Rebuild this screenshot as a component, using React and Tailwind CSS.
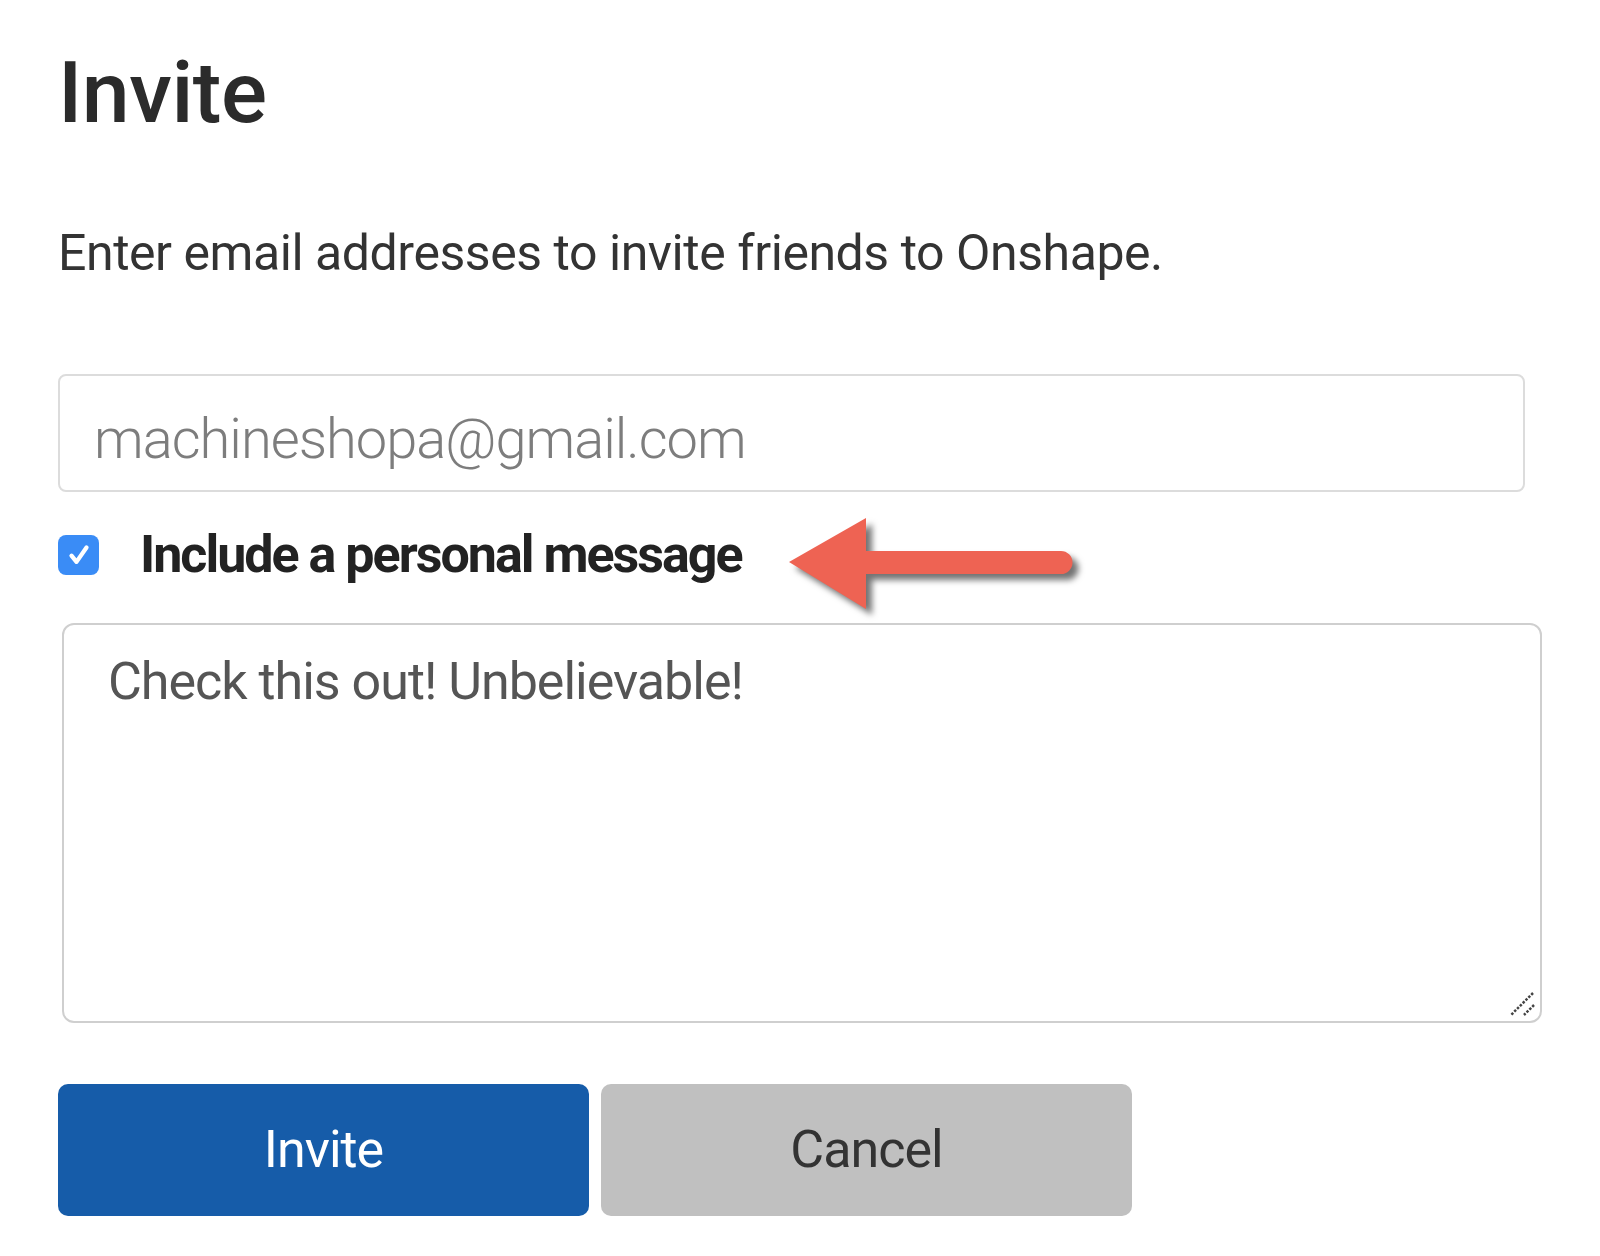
import React from "react";

const ResizeGrip = () => (
  <svg
    className="absolute right-[2px] bottom-[2px]"
    width="32"
    height="32"
    viewBox="0 0 32 32"
  >
    <line x1="27" y1="6" x2="5" y2="28" stroke="#444" strokeWidth="2.5" strokeDasharray="2.5 1.5" />
    <line x1="28" y1="18" x2="18" y2="28" stroke="#444" strokeWidth="2.5" strokeDasharray="2.5 1.5" />
  </svg>
);

const Arrow = () => (
  <svg
    className="absolute left-[780px] top-[505px] pointer-events-none"
    width="320"
    height="130"
    viewBox="0 0 320 130"
    style={{ filter: "drop-shadow(6px 6px 3px rgba(0,0,0,0.55))" }}
  >
    <path
      d="M9 57 L86 13 L86 46 L281 46 A11.5 11.5 0 0 1 281 69 L86 69 L86 104 Z"
      fill="#ee6353"
    />
  </svg>
);

const App = () => {
  return (
    <div
      className="relative w-[1600px] h-[1256px] bg-white pl-[58px] pt-[50px]"
      style={{ fontFamily: "Roboto, 'Noto Sans', sans-serif" }}
    >
      <h1 className="text-[86px] leading-[86px] font-medium text-[#2b2b2b] tracking-[-0.5px]">
        Invite
      </h1>

      <p className="mt-[92px] text-[50px] leading-[50px] text-[#333] tracking-[-0.45px]">
        Enter email addresses to invite friends to Onshape.
      </p>

      <div className="mt-[96px] w-[1467px] h-[118px] border-2 border-[#dcdcdc] rounded-[8px] flex items-center pl-[34px] pt-[12px]">
        <span className="text-[56px] leading-[56px] font-light text-[#7d7d7d] tracking-[-1px]">
          machineshopa@gmail.com
        </span>
      </div>

      <label className="mt-[37px] h-[52px] flex items-center gap-[41px]">
        <span className="w-[41px] h-[40px] rounded-[8px] bg-[#3a8cf6] flex items-center justify-center">
          <svg width="30" height="30" viewBox="0 0 24 24" fill="none">
            <path d="M6 12.5 L10 17.5 L18 6" stroke="white" strokeWidth="3.4" strokeLinecap="round" strokeLinejoin="round" />
          </svg>
        </span>
        <span className="text-[52px] leading-[52px] font-bold text-[#222] tracking-[-2px]">
          Include a personal message
        </span>
      </label>

      <div className="relative mt-[42px] ml-[4px] w-[1480px] h-[400px] border-2 border-[#cfcfcf] rounded-[12px] pl-[44px] pt-[31px]">
        <p className="text-[52px] leading-[52px] text-[#555] tracking-[-1px]">
          Check this out! Unbelievable!
        </p>
        <ResizeGrip />
      </div>

      <div className="mt-[61px] flex gap-[12px]">
        <button className="w-[531px] h-[132px] rounded-[10px] bg-[#165ca9] text-white text-[52px] tracking-[-1px]">
          Invite
        </button>
        <button className="w-[531px] h-[132px] rounded-[10px] bg-[#c0c0c0] text-[#333] text-[52px] tracking-[-1px]">
          Cancel
        </button>
      </div>

      <Arrow />
    </div>
  );
};

export default App;
